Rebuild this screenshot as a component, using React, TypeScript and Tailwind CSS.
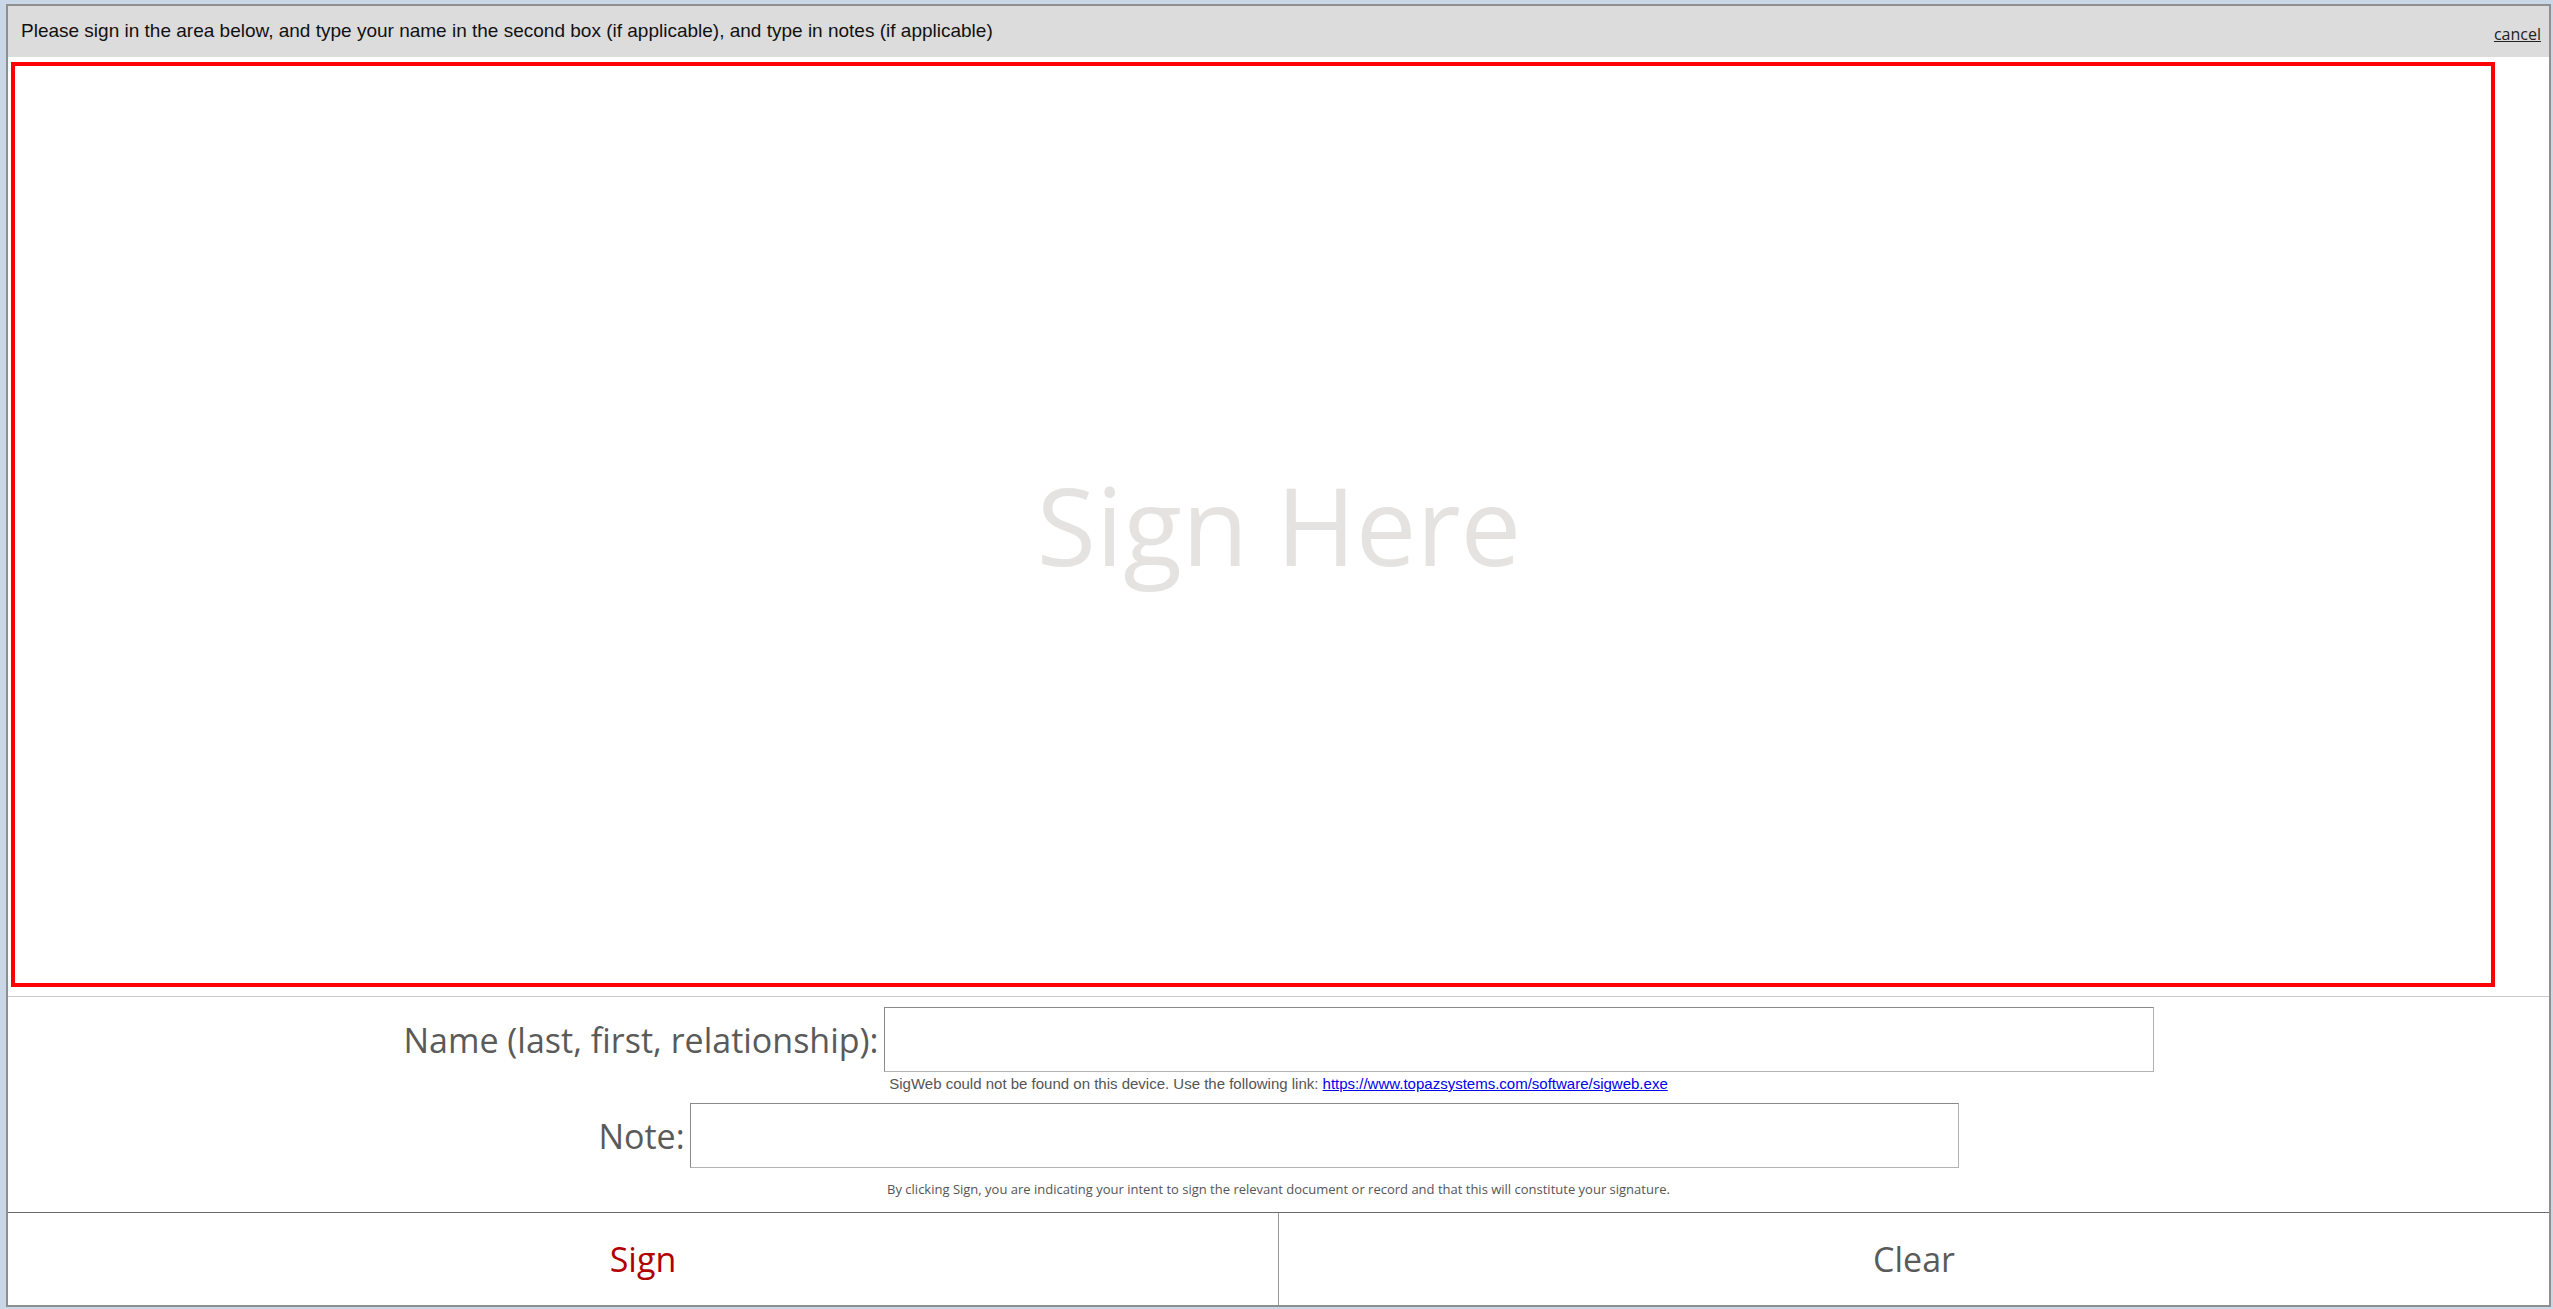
import React from "react";

const calibriLike = { fontFamily: '"Open Sans", "Noto Sans", sans-serif' };

function Header() {
  return (
    <div className="flex h-[51px] shrink-0 items-center justify-between bg-[#dcdcdc] pl-[13px] pr-[8px]">
      <span className="font-['Liberation_Sans',Arial,sans-serif] text-[19px] text-[#111]">
        Please sign in the area below, and type your name in the second box (if applicable), and type in notes (if applicable)
      </span>
      <a href="#" className="mt-[5px] font-['Open_Sans',sans-serif] text-[16px] leading-[20px] text-[#222] underline">
        cancel
      </a>
    </div>
  );
}

function SignPad() {
  return (
    <div className="ml-[3px] mt-[5px] flex h-[925px] w-[2484px] shrink-0 items-center justify-center border-4 border-[#ff0000] bg-white pl-[52px]">
      <span className="font-['Open_Sans',sans-serif] text-[108px] leading-none text-[#e4e3e1] select-none">
        Sign Here
      </span>
    </div>
  );
}

function FieldRow({ label, inputWidth }: { label: string; inputWidth: string }) {
  return (
    <div className="flex items-center justify-center gap-[5px]">
      <label className="text-[34px] leading-none text-[#5a5a5a]" style={calibriLike}>
        {label}
      </label>
      <input
        type="text"
        className={`h-[65px] ${inputWidth} border border-[#b3b3b3] border-l-[#8a8a8a] border-t-[#8a8a8a] bg-white outline-none`}
      />
    </div>
  );
}

export default function App() {
  return (
    <div className="h-[1309px] w-full overflow-hidden bg-[#c9d7e6] pl-[6px] pt-[4px]">
      <div className="flex h-[1303px] w-[2545px] flex-col border-2 border-[#8f8f8f] bg-white">
        <Header />
        <SignPad />

        <div className="mt-[9px] border-t border-[#cccccc]">
          <div className="mt-[10px]">
            <FieldRow label="Name (last, first, relationship):" inputWidth="w-[1270px]" />
          </div>
          <div className="h-[31px] pt-[2px] text-center font-['Liberation_Sans',Arial,sans-serif] text-[15px] leading-[20px] text-[#555]">
            SigWeb could not be found on this device. Use the following link:{" "}
            <a href="#" className="text-[#0000ee] underline">
              https://www.topazsystems.com/software/sigweb.exe
            </a>
          </div>
          <FieldRow label="Note:" inputWidth="w-[1269px]" />
          <div className="flex h-[44px] items-center justify-center text-[13px] text-[#555]" style={calibriLike}>
            By clicking Sign, you are indicating your intent to sign the relevant document or record and that this will constitute your signature.
          </div>
        </div>

        <div className="flex flex-1 border-t border-[#6b6b6b]">
          <button className="flex flex-1 items-center justify-center border-r border-[#999] text-[34px] text-[#b00000]" style={calibriLike}>
            Sign
          </button>
          <button className="flex flex-1 items-center justify-center text-[34px] text-[#5a5a5a]" style={calibriLike}>
            Clear
          </button>
        </div>
      </div>
    </div>
  );
}
